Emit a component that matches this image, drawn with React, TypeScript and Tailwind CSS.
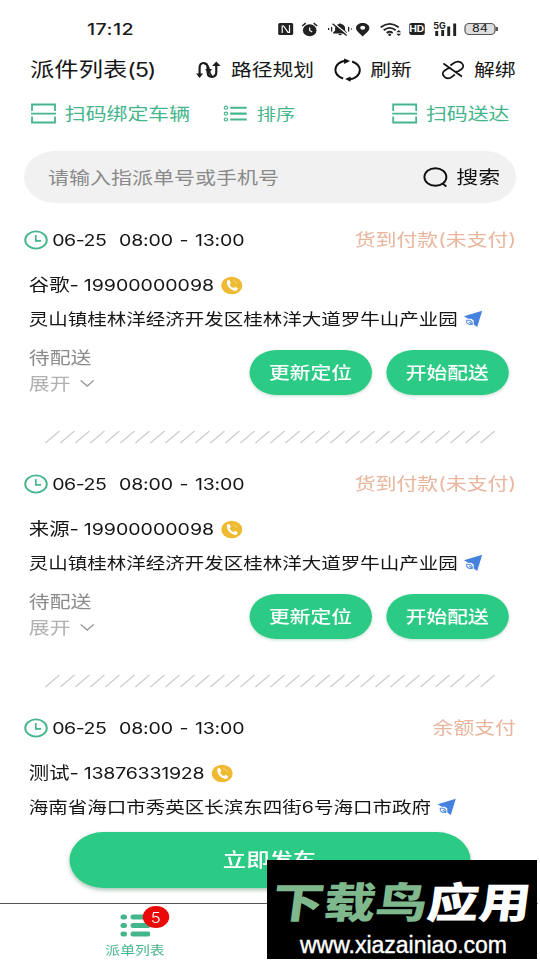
import type { ReactNode } from "react";

/** The phone display is wider than its native layout: everything inside is stretched by this factor. */
const STRETCH = 1.2;

/** Icon canvas measured in on-screen pixels. */
function Glyph({ w, h, children, className = "" }: { w: number; h: number; children: ReactNode; className?: string }) {
  return (
    <svg
      className={"shrink-0 " + className}
      width={w / STRETCH}
      height={h}
      viewBox={`0 0 ${w} ${h}`}
      preserveAspectRatio="none"
      fill="none"
    >
      {children}
    </svg>
  );
}

function StatusBar() {
  return (
    <div className="grid h-11 shrink-0 grid-cols-[72.5px_158.5px_20px_21.5px_23.5px_20px_24.5px_20.5px_26px_1fr] items-center pt-[14px] text-[#1b1b1b]">
      <span />
      <span className="text-[16.3px] font-medium tracking-[0.4px]">17:12</span>
      <Glyph w={17} h={14}>
        <rect x="1" y="1" width="15" height="12" rx="1.500" fill="#222" />
        <path d="M5 11V4H6.500L10.800 10.300H12.300V3" stroke="#fff" strokeWidth="1.200" />
      </Glyph>
      <Glyph w={17} h={15}>
        <ellipse cx="8.500" cy="8.200" rx="6.800" ry="6" fill="#222" />
        <path d="M1 4L4.500 1.200M16 4L12.500 1.200" stroke="#222" strokeWidth="1.500" />
        <path d="M8.500 5.500V8.500L11 10" stroke="#fff" strokeWidth="1.200" />
      </Glyph>
      <Glyph w={25} h={15}>
        <path d="M5.500 11.500V10.500L7.500 8.500V6Q8 2.500 11.500 2Q12.500 .5 13.500 2Q17 2.500 17.500 6V8.500L19.500 10.500V11.500ZM10.500 12H14.500Q12.500 14.500 10.500 12Z" fill="#222" />
        <path d="M6.500 1.500L20 12.500" stroke="#fff" strokeWidth="1.600" />
        <path d="M5 1.800L19 13.500" stroke="#222" strokeWidth="1.400" />
        <path d="M1 6V8M4 5V9.500M21 5V9.500M24 6V8" stroke="#222" strokeWidth="1.300" />
      </Glyph>
      <Glyph w={15} h={15}>
        <path d="M7.500 14.500C4 11 .8 9 .8 6C.8 3 4 1 7.500 1S14.200 3 14.200 6C14.200 9 11 11 7.500 14.500Z" fill="#222" />
        <ellipse cx="7.500" cy="5.800" rx="2.500" ry="2" fill="#fff" />
      </Glyph>
      <Glyph w={23} h={15}>
        <path d="M1.500 5.300Q10.500 -1.500 19.500 5.300M4.500 8.300Q10.500 3.500 16.500 8.300M7.500 11Q10.500 8.500 13.500 11" stroke="#222" strokeWidth="1.800" />
        <ellipse cx="10.500" cy="12.700" rx="1.400" ry="1.200" fill="#222" />
        <path d="M17 10.300L19.500 8L22 10.300ZM17 11.700L19.500 14L22 11.700Z" fill="#222" />
      </Glyph>
      <span className="flex h-[12px] w-[13.500px] items-center justify-center rounded-[2px] bg-[#222] text-[8.500px] font-bold text-white">HD</span>
      <Glyph w={25} h={15}>
        <path d="M3.500 9V14M9.500 8V14M15.500 4.500V14M21.500 1.500V14" stroke="#222" strokeWidth="2.900" />
        <text x="0" y="7" fontSize="9" fontWeight="700" fill="#222" stroke="#fff" strokeWidth="1.500" paintOrder="stroke">5G</text>
      </Glyph>
      <span className="flex items-center">
        <span className="flex h-[12px] w-[26px] items-center justify-center rounded-[4px] border border-[#555] bg-[#dedede] text-[10.5px]">84</span>
        <span className="h-[4px] w-[1.500px] bg-[#555]" />
      </span>
    </div>
  );
}

function RouteIcon() {
  return (
    <Glyph w={26} h={18} className="text-[#1c1c1c]">
      <path d="M4 14V7Q4 2 8 2T12 7V11Q12 15.800 16.300 15.800T20.700 11V4" stroke="currentColor" strokeWidth="2.200" />
      <path d="M8.500 2.500Q13 4 13.500 8.500Q14 13 16 15" stroke="currentColor" strokeWidth="1.800" />
      <path d="M0.500 12.500H7.500L4 17ZM16.500 5H25L20.700 .5ZM9.500 8H16.500L13 12.500Z" fill="currentColor" />
    </Glyph>
  );
}

function RefreshIcon() {
  return (
    <Glyph w={28} h={24} className="-ml-[1px]">
      <path d="M9.500 20.500C4 18.500 1.800 15.500 1.800 12C1.800 7 6.500 2.700 13 2.700M18.500 3.500C24 5.500 26.200 8.500 26.200 12C26.200 17 21.500 21.300 15 21.300" stroke="#111" strokeWidth="2" />
      <path d="M10.500 .5L16.500 3L10.500 6ZM17 18.500L11.500 21L17 23.700Z" fill="#111" />
    </Glyph>
  );
}

function UnbindIcon() {
  return (
    <Glyph w={25} h={20} className="-ml-[1.500px]">
      <path d="M3 3.500L21.500 16.500" stroke="#111" strokeWidth="1.700" />
      <path d="M10 5.500L13.500 3Q17.500 .3 21 2.800Q24.800 6 21 9.300L18 11.300Q16.500 12 15 11.500M14.500 14.500L11.500 16.800Q8 19.700 4.500 17.200Q.5 13.800 4 10.700L7 8.700Q8.500 7.800 10 8.300" stroke="#111" strokeWidth="1.700" />
    </Glyph>
  );
}

function ScanIcon() {
  return (
    <Glyph w={27} h={21}>
      <path d="M2 8V1.500H25V8M2 13.500V19.500H25V13.500M1 10.700H26" stroke="#45b68b" strokeWidth="1.800" />
    </Glyph>
  );
}

function SortIcon() {
  return (
    <Glyph w={24} h={17}>
      <path d="M7 2.700H23.500M7 8.600H23.500M7 14.500H23.500" stroke="#45b68b" strokeWidth="2.100" />
      {[2.7, 8.6, 14.5].map((y) => (
        <ellipse key={y} cx="2.700" cy={y} rx="1.700" ry="1.500" stroke="#45b68b" strokeWidth="1.200" />
      ))}
    </Glyph>
  );
}

function Header() {
  return (
    <>
      <div className="grid h-[50px] shrink-0 grid-cols-[25px_138px_29.5px_86.500px_29.500px_59.500px_27px_1fr] items-center whitespace-nowrap pt-px text-[17.300px] text-[#161616]">
        <span />
        <h1 className="pt-px text-[20.300px]">
          派件列表<span className="text-[19.5px] tracking-[-1px]">(5)</span>
        </h1>
        <RouteIcon />
        <span>路径规划</span>
        <RefreshIcon />
        <span>刷新</span>
        <UnbindIcon />
        <span>解绑</span>
      </div>
      <div className="grid h-[39px] shrink-0 grid-cols-[25px_29px_132px_28px_112px_29px_1fr] items-center whitespace-nowrap text-[17.400px] text-[#45b68b]">
        <span />
        <ScanIcon />
        <span className="pt-px">扫码绑定车辆</span>
        <SortIcon />
        <span className="text-[16px]">排序</span>
        <ScanIcon />
        <span className="pt-px">扫码送达</span>
      </div>
    </>
  );
}

function SearchBar() {
  return (
    <div className="mx-5 mt-[18px] flex h-[52px] shrink-0 items-center rounded-full bg-[#f1f1f1] pl-[20px] text-[17.500px] whitespace-nowrap">
      <span className="w-[312px] pt-[2px] text-[#8a8a8a]">请输入指派单号或手机号</span>
      <Glyph w={26} h={21}>
        <ellipse cx="13" cy="10" rx="11" ry="8.800" stroke="#111" strokeWidth="1.900" />
        <path d="M20 16.500L24 19.500" stroke="#111" strokeWidth="1.900" />
      </Glyph>
      <span className="ml-[6.500px] pt-[2px] text-[18.300px] text-[#111]">搜索</span>
    </div>
  );
}

type Order = { name: string; phone: string; address: string; pay: string };

function OrderCard({ order, last }: { order: Order; last?: boolean }) {
  return (
    <article className="h-[244px] shrink-0 whitespace-nowrap text-[#161616]">
      <div className="flex h-[26px] items-center pl-5 pr-[20px]">
        <Glyph w={24} h={20}>
          <ellipse cx="12" cy="10" rx="10.800" ry="8.600" stroke="#45b68b" strokeWidth="1.900" />
          <path d="M11.800 5V10.800H17" stroke="#45b68b" strokeWidth="1.700" />
        </Glyph>
        <span className="ml-[3.500px] text-[16.300px] tracking-[-0.400px]">06-25</span>
        <span className="ml-[10.500px] text-[16.300px] tracking-[-0.120px] [word-spacing:1px]">08:00 - 13:00</span>
        <span className="ml-auto pt-px text-[17.400px] text-[#e9b59c]">{order.pay}</span>
      </div>
      <div className="mt-[19px] flex h-[26px] items-center pl-[24px] text-[17px]">
        <span className="pt-[2px]">{order.name}-</span>
        <span className={last ? "ml-[4px] text-[16.300px] tracking-[-0.200px]" : "ml-[4px] text-[16.300px]"}>{order.phone}</span>
        <Glyph w={22} h={19} className={last ? "ml-[6px]" : "ml-[5.500px]"}>
          <ellipse cx="11" cy="9.500" rx="10.500" ry="8.700" fill="#efba32" />
          <path d="M6.300 4.500L8.500 4L10.200 7L8.800 8.500Q10 11 12.800 12L14.500 10.800L17 12.500Q16.500 15 14.500 15C10 14.500 5 9.500 6.300 4.500Z" fill="#fff" />
          <path d="M12 4.500Q15.500 5 16 8" stroke="#f5d67e" strokeWidth=".8" />
        </Glyph>
      </div>
      <div className="mt-[8.500px] flex h-[26px] items-center pl-[24px] text-[16.250px]">
        <span>{order.address}</span>
        <Glyph w={20} h={18} className="ml-[4.500px] -mt-px">
          <path d="M19 .8L14 17L10.500 14.500V10.500L8 8.700H5L.8 6.300Z" fill="#4582df" />
          <path d="M3.500 10.300H7L9 12.300V14.500H6L3.500 12.700ZM6 12L8.500 14" stroke="#5b91e4" strokeWidth="1.100" />
        </Glyph>
      </div>
      {!last && (
        <>
          <div className="mt-[11px] flex h-[54px] pl-[24px]">
            <div className="w-[183.500px] pt-px text-[17.400px] leading-[26px]">
              <div className="text-[#8b8b8b]">待配送</div>
              <div className="flex items-center text-[#b1b1b1]">
                展开
                <Glyph w={16} h={9} className="ml-[7.500px]">
                  <path d="M1.500 1.500L8 7L14.500 1.500" stroke="#999" strokeWidth="1.400" />
                </Glyph>
              </div>
            </div>
            {["更新定位", "开始配送"].map((label) => (
              <button
                key={label}
                className="mr-[11.500px] mt-[6px] h-[45px] w-[102.500px] rounded-full bg-[#2bcb86] pt-[2px] text-[17.300px] font-medium text-white shadow-[0_1px_3px_rgba(0,110,60,0.25)]"
              >
                {label}
              </button>
            ))}
          </div>
          <svg className="ml-[37px] mt-[32px] block" width="376" height="14" viewBox="0 0 451 14" preserveAspectRatio="none">
            {Array.from({ length: 30 }, (_, i) => (
              <path key={i} d={`M${1 + i * 15} 13L${15 + i * 15} 1`} stroke="#cacaca" strokeWidth="1.100" />
            ))}
          </svg>
        </>
      )}
    </article>
  );
}

const address = "灵山镇桂林洋经济开发区桂林洋大道罗牛山产业园";
const orders: Order[] = [
  { name: "谷歌", phone: "19900000098", address, pay: "货到付款(未支付)" },
  { name: "来源", phone: "19900000098", address, pay: "货到付款(未支付)" },
  { name: "测试", phone: "13876331928", address: "海南省海口市秀英区长滨东四街6号海口市政府", pay: "余额支付" },
];

function TabBar() {
  return (
    <nav className="mr-[2.500px] h-[57px] shrink-0 border-t border-[#555] bg-white">
      <div className="flex w-[225px] flex-col items-center pt-[9px]">
        <div className="relative">
          <Glyph w={31} h={24}>
            {[4, 12.5, 21].map((y) => (
              <path key={y} d={`M3 ${y}H4.500M13 ${y}H28`} stroke="#45b68b" strokeWidth="5" strokeLinecap="round" />
            ))}
          </Glyph>
          <span className="absolute -top-[7px] left-[19px] flex h-[22px] w-[22.500px] items-center justify-center rounded-full bg-[#ea0a0a] text-[14px] font-light text-white">
            5
          </span>
        </div>
        <span className="mt-[4px] text-[12.400px] leading-[20px] text-[#45b68b]">派单列表</span>
      </div>
    </nav>
  );
}

function Watermark() {
  return (
    <div className="absolute left-[267px] top-[860px] flex h-[99px] w-[270px] flex-col items-center overflow-hidden whitespace-nowrap bg-black">
      <div className="mt-[13px] -skew-x-[6deg] scale-x-[1.230] font-['Noto_Sans_CJK_SC',sans-serif] text-[42px] font-black leading-[54px] text-white">
        <span className="text-[#7fb88c]">下载鸟</span>应用
      </div>
      <div className="mt-[5px] pl-[3px] font-['Liberation_Sans',sans-serif] text-[23px] leading-[27px] text-white [-webkit-text-stroke:0.4px_white]">
        www.xiazainiao.com
      </div>
    </div>
  );
}

export default function App() {
  return (
    <div className="relative h-[960px] w-[540px] overflow-hidden bg-white">
      <div className="flex h-[960px] w-[450px] origin-left scale-x-[1.2] flex-col bg-white font-['Inter','Noto_Sans_CJK_SC',sans-serif]">
        <StatusBar />
        <Header />
        <SearchBar />
        <main className="relative mt-[24px] flex min-h-0 flex-1 flex-col overflow-hidden">
          {orders.map((o, i) => (
            <OrderCard key={i} order={o} last={i === orders.length - 1} />
          ))}
          <button className="absolute left-[57.500px] top-[605px] h-[56px] w-[334px] rounded-[28px] bg-[#2bcb86] pt-[2px] text-[19.400px] font-medium text-white shadow-[0_2px_4px_rgba(0,80,40,0.35)]">
            立即发车
          </button>
        </main>
        <TabBar />
      </div>
      <Watermark />
    </div>
  );
}
